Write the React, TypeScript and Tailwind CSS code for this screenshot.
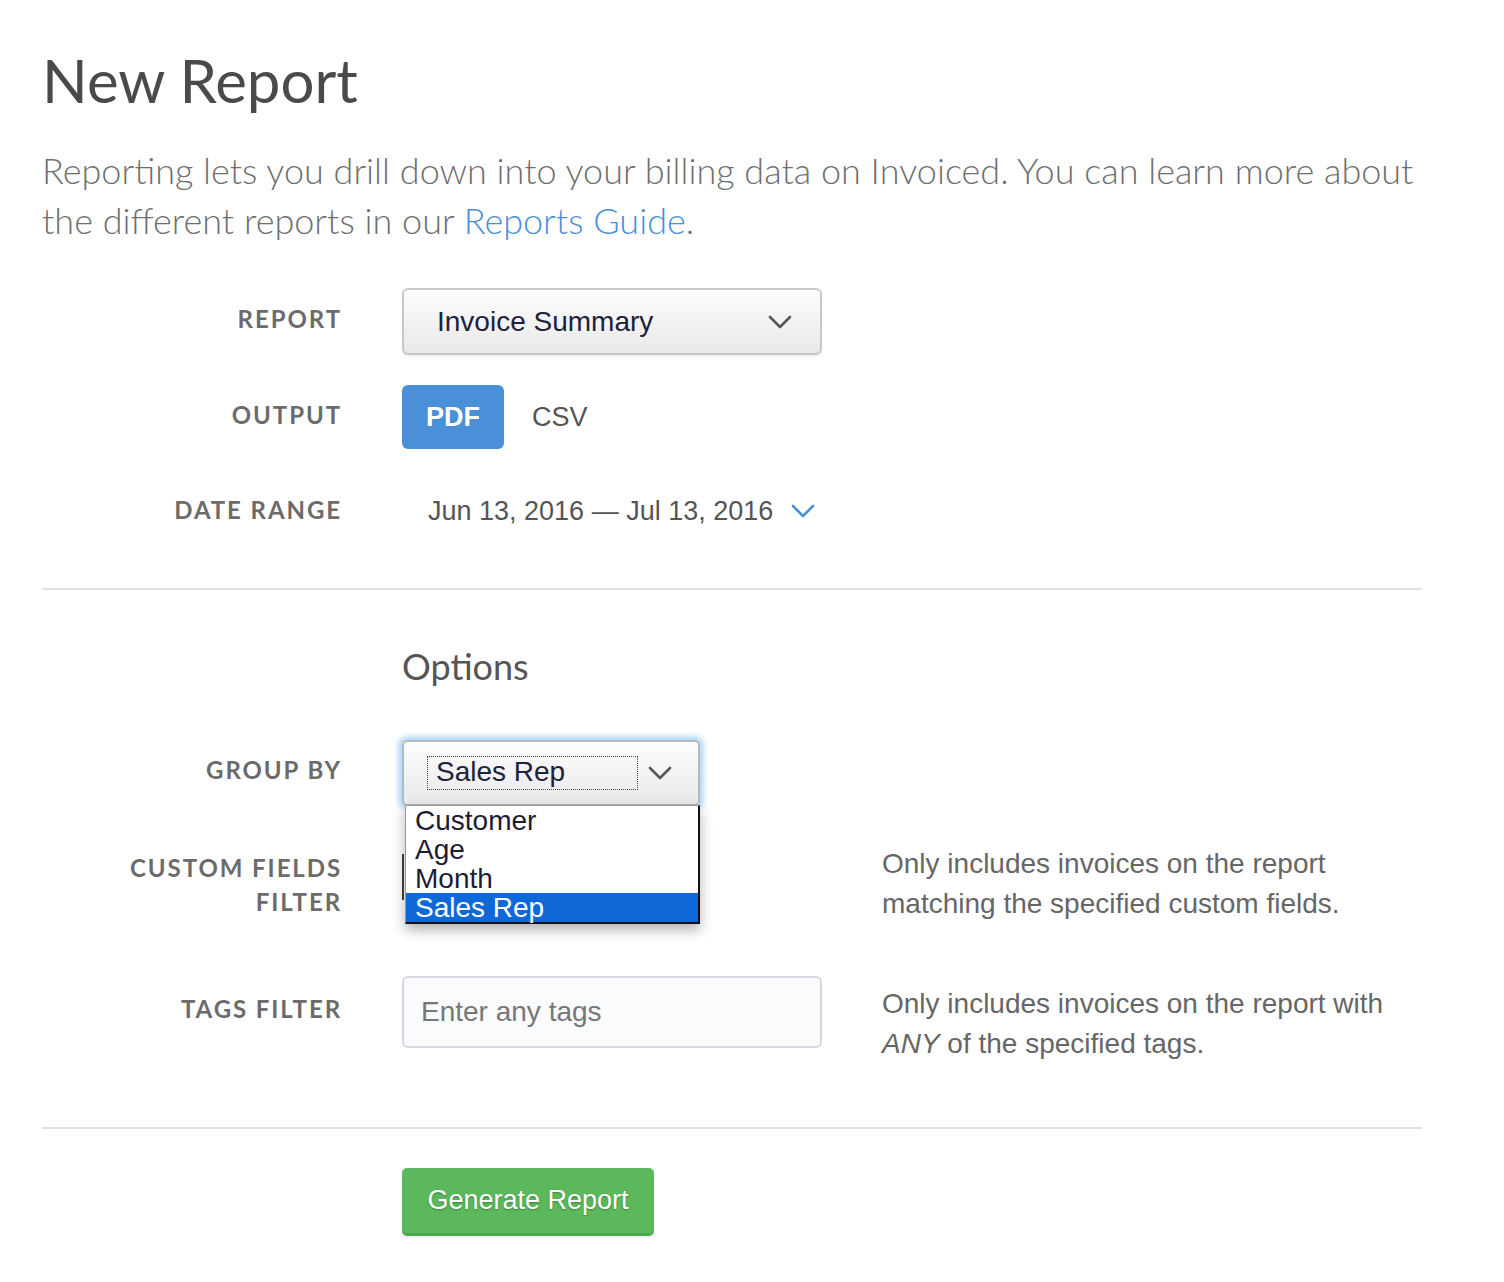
import React from 'react';

const labelCls =
  "w-[300px] shrink-0 text-right font-['Lato',sans-serif] font-bold text-[24px] leading-[34px] tracking-[0.08em] uppercase text-[#6b6b6b]";
const helv = "font-['Liberation_Sans',Arial,sans-serif]";

const Chevron: React.FC<{ color: string; className?: string }> = ({ color, className }) => (
  <svg viewBox="0 0 24 14" className={className} fill="none">
    <polyline points="2,2 12,12 22,2" stroke={color} strokeWidth="2.6" strokeLinecap="round" strokeLinejoin="round" />
  </svg>
);

const groupOptions = ['Customer', 'Age', 'Month', 'Sales Rep'];

const App: React.FC = () => {
  return (
    <div className="min-h-screen bg-white pt-[44px] pb-[40px] px-[42px]">
      <h1 className="font-['Lato',sans-serif] text-[60px] leading-[72px] text-[#4a4a4a]">New Report</h1>
      <p className="mt-[29px] font-['Lato',sans-serif] font-light text-[36px] leading-[50px] text-[#6f6f6f] whitespace-nowrap">
        Reporting lets you drill down into your billing data on Invoiced. You can learn more about
        <br />
        the different reports in our <a className="text-[#4a90d9]">Reports Guide</a>.
      </p>

      {/* Report */}
      <div className="mt-[43px] flex items-center h-[67px]">
        <div className={`${labelCls} -mt-[6px]`}>Report</div>
        <div className="ml-[60px] w-[420px] h-[67px] flex items-center justify-between pl-[33px] pr-[28px] rounded-[6px] border-2 border-[#c8c8c8] bg-gradient-to-b from-[#fdfdfd] to-[#e9e9e9] shadow-[0_2px_2px_rgba(0,0,0,0.06)]">
          <span className={`${helv} text-[28px] text-[#20213a]`}>Invoice Summary</span>
          <Chevron color="#555" className="w-[24px] h-[14px]" />
        </div>
      </div>

      {/* Output */}
      <div className="mt-[30px] flex items-center h-[64px]">
        <div className={`${labelCls} -mt-[4px]`}>Output</div>
        <div className="ml-[60px] flex items-center">
          <div className={`${helv} w-[102px] h-[64px] rounded-[6px] bg-[#4a90d9] text-white font-bold text-[27px] flex items-center justify-center`}>
            PDF
          </div>
          <div className={`${helv} ml-[28px] text-[27px] text-[#555]`}>CSV</div>
        </div>
      </div>

      {/* Date range */}
      <div className="mt-[30px] flex items-center h-[64px]">
        <div className={`${labelCls} -mt-[2px]`}>Date Range</div>
        <div className="ml-[60px] pl-[26px] flex items-center">
          <span className={`${helv} text-[27px] text-[#555]`}>Jun 13, 2016 — Jul 13, 2016</span>
          <Chevron color="#4a90d9" className="ml-[18px] w-[24px] h-[14px]" />
        </div>
      </div>

      <div className="mt-[45px] w-[1380px] border-t-2 border-[#e2e2e2]" />

      <h2 className="mt-[56px] ml-[360px] font-['Lato',sans-serif] text-[36px] leading-[40px] text-[#555]">Options</h2>

      {/* Group by */}
      <div className="mt-[54px] flex items-center h-[66px]">
        <div className={`${labelCls} -mt-[6px]`}>Group By</div>
        <div className="ml-[60px] relative z-10">
          <div className="w-[298px] h-[66px] flex items-center justify-between pl-[24px] pr-[26px] rounded-[5px] border-2 border-[#b8b8b8] bg-gradient-to-b from-[#fdfdfd] to-[#e9e9e9] shadow-[0_0_5px_4px_rgba(130,195,250,0.6)]">
            <span className={`${helv} inline-block w-[209px] h-[32px] leading-[30px] pl-[8px] outline-1 outline-dotted outline-[#444] text-[28px] text-[#20213a]`}>
              Sales Rep
            </span>
            <Chevron color="#555" className="w-[24px] h-[14px]" />
          </div>
          <ul className="absolute left-[3px] top-[65px] w-[295px] bg-white border border-[#999] border-r-2 border-b-2 border-r-[#111] border-b-[#111] shadow-[0_6px_12px_rgba(0,0,0,0.3)]">
            {groupOptions.map((opt) => (
              <li
                key={opt}
                className={`${helv} px-[9px] text-[28px] leading-[29px] ${opt === 'Sales Rep' ? 'bg-[#0f68d8] text-white' : 'text-[#1c1d33]'}`}
              >
                {opt}
              </li>
            ))}
          </ul>
        </div>
      </div>

      {/* Custom fields */}
      <div className="mt-[38px] flex items-start h-[80px]">
        <div className={`${labelCls} pt-[7px]`}>
          Custom Fields
          <br />
          Filter
        </div>
        <div className="ml-[60px] w-[420px] pt-[10px]">
          <div className="w-[200px] h-[46px] border-l-2 border-[#444]" />
        </div>
        <p className={`${helv} ml-[60px] text-[28px] leading-[40px] text-[#666]`}>
          Only includes invoices on the report
          <br />
          matching the specified custom fields.
        </p>
      </div>

      {/* Tags */}
      <div className="mt-[52px] flex items-start">
        <div className={`${labelCls} pt-[16px]`}>Tags Filter</div>
        <div className="ml-[60px] w-[420px] h-[72px] flex items-center pl-[17px] rounded-[6px] border-2 border-[#d4d7de] bg-[#fafbfc]">
          <span className={`${helv} text-[28px] text-[#777]`}>Enter any tags</span>
        </div>
        <p className={`${helv} ml-[60px] pt-[8px] text-[28px] leading-[40px] text-[#666]`}>
          Only includes invoices on the report with
          <br />
          <em>ANY</em> of the specified tags.
        </p>
      </div>

      <div className="mt-[63px] w-[1380px] border-t-2 border-[#e2e2e2]" />

      <div className="mt-[39px] ml-[360px]">
        <button
          className={`${helv} w-[252px] h-[68px] rounded-[5px] bg-[#5cb85c] border-b-[3px] border-[#4ca84c] text-white text-[27px] [text-shadow:0_1px_2px_rgba(0,0,0,0.3)] shadow-[0_2px_3px_rgba(0,0,0,0.08)]`}
        >
          Generate Report
        </button>
      </div>
    </div>
  );
};

export default App;
